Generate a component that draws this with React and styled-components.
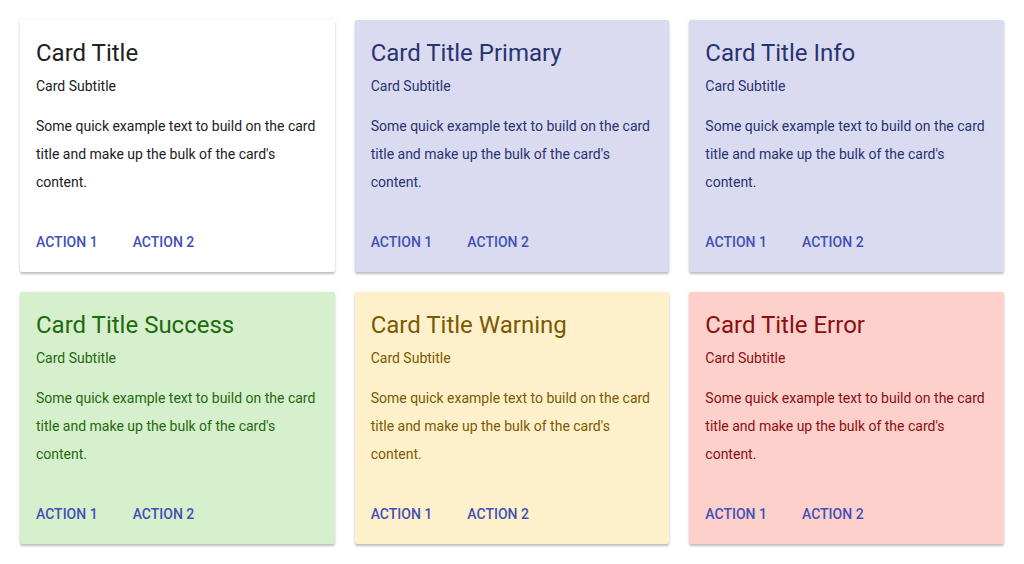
import React from 'react';
import styled, { createGlobalStyle } from 'styled-components';

const GlobalStyle = createGlobalStyle`
  body {
    margin: 0;
    background: #fff;
    font-family: Roboto, "Liberation Sans", sans-serif;
  }
`;

const variants = {
  default: { bg: '#ffffff', title: '#212121', text: '#212121' },
  primary: { bg: '#dadbf0', title: '#283370', text: '#283370' },
  info: { bg: '#dadbf0', title: '#283370', text: '#283370' },
  success: { bg: '#d6efcc', title: '#1e6a0e', text: '#1e6a0e' },
  warning: { bg: '#fff0cc', title: '#7a5a00', text: '#7a5a00' },
  error: { bg: '#fdd0cc', title: '#8a0f0f', text: '#8a0f0f' },
};

const cards = [
  { variant: 'default', title: 'Card Title' },
  { variant: 'primary', title: 'Card Title Primary' },
  { variant: 'info', title: 'Card Title Info' },
  { variant: 'success', title: 'Card Title Success' },
  { variant: 'warning', title: 'Card Title Warning' },
  { variant: 'error', title: 'Card Title Error' },
];

const App = () => (
  <>
    <GlobalStyle />
    <Grid>
      {cards.map((card) => (
        <Card key={card.variant} variant={card.variant}>
          <Content>
            <Title>{card.title}</Title>
            <Subtitle>Card Subtitle</Subtitle>
            <Body>
              Some quick example text to build on the card title and make up the bulk of the card's content.
            </Body>
          </Content>
          <Actions>
            <ActionButton>Action 1</ActionButton>
            <ActionButton>Action 2</ActionButton>
          </Actions>
        </Card>
      ))}
    </Grid>
  </>
);

const Grid = styled.div`
  display: grid;
  grid-template-columns: repeat(3, 1fr);
  gap: 20px;
  padding: 20px;
`;

const Card = styled.div`
  display: flex;
  flex-direction: column;
  background: ${({ variant }) => variants[variant].bg};
  color: ${({ variant }) => variants[variant].text};
  border-radius: 2px;
  box-shadow: 0 2px 2px rgba(0, 0, 0, 0.2), 0 1px 4px rgba(0, 0, 0, 0.1);
  height: 252px;
`;

const Content = styled.div`
  padding: 17px 16px 16px;
`;

const Title = styled.h2`
  margin: 0;
  font-size: 24px;
  font-weight: 400;
  line-height: 32px;
`;

const Subtitle = styled.div`
  margin-top: 7px;
  font-size: 14px;
  line-height: 20px;
`;

const Body = styled.p`
  margin: 16px 0 0;
  font-size: 14px;
  line-height: 28px;
`;

const Actions = styled.div`
  display: flex;
  align-items: center;
  gap: 35px;
  padding: 0 16px;
  height: 60px;
  margin-top: auto;
`;

const ActionButton = styled.button`
  border: none;
  background: none;
  padding: 0;
  font-family: Roboto, "Liberation Sans", sans-serif;
  font-size: 14px;
  font-weight: 500;
  text-transform: uppercase;
  color: #3f51b5;
  cursor: pointer;
`;

export default App;
